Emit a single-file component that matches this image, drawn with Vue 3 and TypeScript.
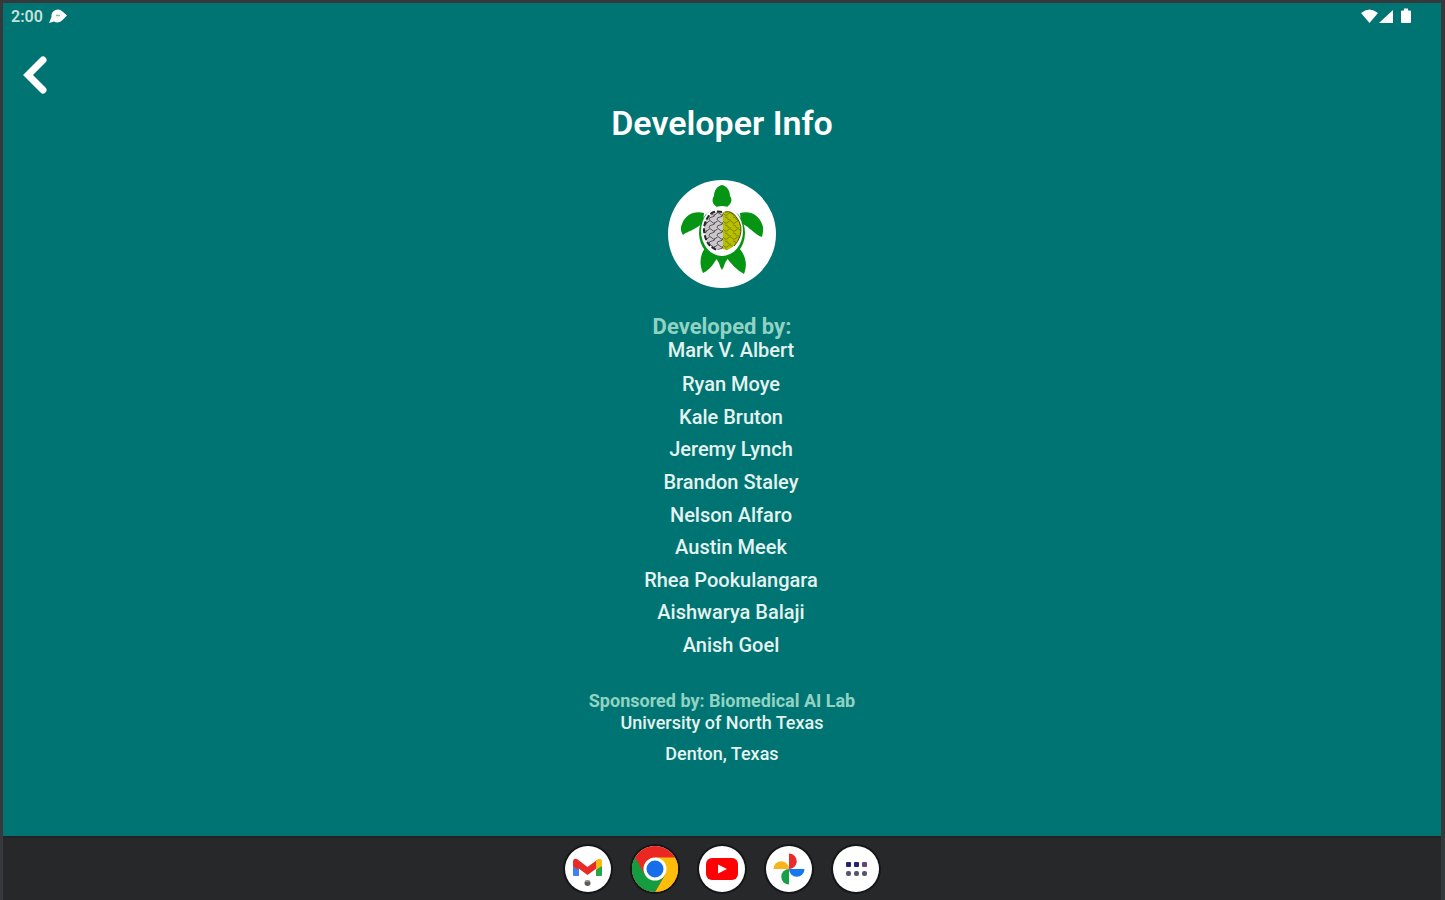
<script setup lang="ts">
const developers: string[] = [
  'Ryan Moye',
  'Kale Bruton',
  'Jeremy Lynch',
  'Brandon Staley',
  'Nelson Alfaro',
  'Austin Meek',
  'Rhea Pookulangara',
  'Aishwarya Balaji',
  'Anish Goel',
]
const goBack = (): void => window.history.back()
</script>

<template>
  <div class="device">
    <div class="screen">
      <header class="status">
        <div class="status-left">
          <span class="clock">2:00</span>
          <svg width="20" height="16" viewBox="0 0 20 16" aria-hidden="true">
            <path d="M1 15 L3.500 9 A6.500 6.500 0 0 1 14.500 3.500 L19 7.500 L14.500 12 A6.500 6.500 0 0 1 6 13.500 Z" fill="#fff" />
            <path d="M8 7.500h4" stroke="#8fb9ae" stroke-width="1.500" />
          </svg>
        </div>
        <svg width="52" height="18" viewBox="0 0 52 18" aria-hidden="true">
          <path d="M0 6 Q8.500 -1 17 6 L8.500 16 Z" fill="#fff" />
          <path d="M18 16 L32 3 V16 Z" fill="#fff" />
          <path d="M43 1.500h4v2h2q1 0 1 1V15q0 1-1 1h-8q-1 0-1-1V4.500q0-1 1-1h2Z" fill="#fff" />
        </svg>
      </header>

      <button class="back" type="button" aria-label="Back" @click="goBack">
        <svg width="24" height="38" viewBox="0 0 24 38" aria-hidden="true">
          <path d="M20 4 L5 19 L20 34" fill="none" stroke="#fff" stroke-width="7" stroke-linecap="round" stroke-linejoin="miter" />
        </svg>
      </button>

      <main class="content">
        <h1>Developer Info</h1>
        <svg class="logo" viewBox="0 0 108 108" role="img" aria-label="Turtle logo">
          <defs>
            <pattern id="left-folds" width="8" height="8" patternUnits="userSpaceOnUse">
              <rect width="8" height="8" fill="#cac8cb" />
              <path d="M0 2q2-3 4 0t4 0M1 8q0-3 3-3t3-3" fill="none" stroke="#5a565e" stroke-width="1" />
            </pattern>
            <pattern id="right-folds" width="8" height="8" patternUnits="userSpaceOnUse">
              <rect width="8" height="8" fill="#b7bf00" />
              <path d="M0 2q2 3 4 0t4 0M1 5q3 0 3 2t3 1" fill="none" stroke="#7f8600" stroke-width="1" />
            </pattern>
          </defs>
          <circle cx="54" cy="54" r="54" fill="#fff" />
          <g fill="#069414">
            <path d="M54 5C59 6 62 11 62 16C65 20 63 24 59 27H49C45 25 43 20 46 16C46 11 49 6 54 5Z" />
            <path d="M36 33C26 30 17 35 14 44C12 48 13 52 15 55C20 51 27 50 35 43Z" />
            <path d="M72 33C82 30 91 35 94 44C96 48 95 53 94 57C87 55 82 47 73 43Z" />
            <path d="M37 68C32 75 31 84 35 93C42 90 46 83 50 77Z" />
            <path d="M71 68C77 75 80 83 76 94C69 90 63 84 58 77Z" />
            <path d="M46 75H62L57 83Q56 87 54 90Q52 87 51 83Z" />
            <ellipse cx="54" cy="53" rx="23" ry="26" />
          </g>
          <ellipse cx="54" cy="51" rx="21" ry="25" fill="#fff" />
          <path d="M54 32Q44 30 40 37Q34 46 37 56Q39 66 49 70L55 69V32Z" fill="url(#left-folds)" />
          <path d="M54 32Q44 30 40 37Q34 46 37 56Q39 66 49 70" fill="none" stroke="#282328" stroke-width="2" stroke-dasharray="5 2" />
          <path d="M55 32Q64 30 69 38Q75 46 72 56Q69 66 59 70L55 69Z" fill="url(#right-folds)" />
          <path d="M57 32Q64 30 69 38Q75 46 72 56Q70 62 66 66" fill="none" stroke="#4e5200" stroke-width="1" />
        </svg>

        <section class="team">
          <h2>Developed by:</h2>
          <p class="lead">Mark V. Albert</p>
          <ul>
            <li v-for="name in developers" :key="name">{{ name }}</li>
          </ul>
        </section>

        <section class="sponsor">
          <h2>Sponsored by: Biomedical AI Lab</h2>
          <p>University of North Texas</p>
          <p>Denton, Texas</p>
        </section>
      </main>
    </div>

    <nav class="dock" aria-label="Apps">
      <button type="button" aria-label="Gmail">
        <svg viewBox="0 0 46 46" aria-hidden="true">
          <path d="M8 17v12q0 1 1 1h5V19Z" fill="#3f82f4" />
          <path d="M37 17v12q0 1-1 1h-5V19Z" fill="#25a54a" />
          <path d="M8 20v-4q0-4 4-3l10.500 8 9.500-7v8l-9.500 7L13 22v2Z" fill="#e92b25" />
          <path d="M31 15l2-2q4-1 4 3v4l-6 4Z" fill="#fbb90a" />
          <circle cx="22.500" cy="37" r="3" fill="#5c5c5c" />
          <path d="M20 35h5" stroke="#bbb" />
        </svg>
      </button>
      <button type="button" aria-label="Chrome">
        <svg viewBox="0 0 46 46" aria-hidden="true">
          <circle cx="23" cy="23" r="23" fill="#ea2821" />
          <path d="M23 11.500H42.920A23 23 0 0 1 23 46L33 28.750Z" fill="#fdbd08" />
          <path d="M13 28.750L3.080 11.500A23 23 0 0 0 23 46L33 28.750Z" fill="#159c40" />
          <circle cx="23" cy="23" r="11.500" fill="#fff" />
          <circle cx="23" cy="23" r="8.500" fill="#176ee9" />
        </svg>
      </button>
      <button type="button" aria-label="YouTube">
        <svg viewBox="0 0 46 46" aria-hidden="true">
          <rect x="7" y="12" width="32" height="22" rx="6" fill="#fe0105" />
          <path d="M19 18.500v9l9-4.500Z" fill="#fff" />
        </svg>
      </button>
      <button type="button" aria-label="Photos">
        <svg viewBox="0 0 46 46" aria-hidden="true">
          <path d="M23 23V7.500A7.700 7.700 0 0 1 23 23Z" fill="#ea2b2b" />
          <path d="M23 23H38.500A7.700 7.700 0 0 1 23 23Z" fill="#1677ee" />
          <path d="M23 23V38.500A7.700 7.700 0 0 1 23 23Z" fill="#16a04a" />
          <path d="M23 23H7.500A7.700 7.700 0 0 1 23 23Z" fill="#f8b51b" />
        </svg>
      </button>
      <button type="button" aria-label="All apps">
        <svg viewBox="0 0 46 46" aria-hidden="true">
          <g fill="#24246f">
            <rect x="13" y="16" width="5" height="5" rx="1" />
            <rect x="21" y="16" width="5" height="5" rx="1" />
            <rect x="29" y="16" width="5" height="5" rx="1" fill="#684570" />
          </g>
          <g fill="#55556b">
            <rect x="13" y="25" width="5" height="5" rx="2" />
            <rect x="21" y="25" width="5" height="5" rx="2" />
            <rect x="29" y="25" width="5" height="5" rx="2" />
          </g>
        </svg>
      </button>
    </nav>
  </div>
</template>

<style>
body {
  margin: 0;
}
</style>

<style scoped>
.device {
  box-sizing: border-box;
  min-height: 100vh;
  display: flex;
  flex-direction: column;
  border: solid #35393c;
  border-width: 3px 4px 0 3px;
  background: #27282a;
  color: #e4f3f0;
  font-family: Roboto, "Liberation Sans", sans-serif;
}
.screen {
  flex: 1;
  background: #007373;
}
.status {
  display: flex;
  justify-content: space-between;
  align-items: center;
  height: 26px;
  padding: 0 28px 0 8px;
}
.status-left {
  display: flex;
  align-items: center;
  gap: 5px;
}
.clock {
  font-size: 16px;
  font-weight: 600;
  color: #c5e2da;
}
.back {
  display: block;
  margin: 24px 0 0 20px;
  padding: 3px 0;
  border: 0;
  background: none;
  cursor: pointer;
}
.back svg {
  display: block;
}
.content {
  display: flex;
  flex-direction: column;
  align-items: center;
  text-align: center;
}
h1,
h2,
p,
ul {
  margin: 0;
  padding: 0;
}
h1 {
  margin-top: 6px;
  font-size: 34px;
  line-height: 40px;
  font-weight: 600;
  color: #fff;
}
.logo {
  width: 108px;
  height: 108px;
  margin-top: 37px;
}
h2 {
  font-weight: 700;
  color: #91d3c2;
}
.team {
  margin-top: 27px;
  font-size: 20px;
  line-height: 24px;
  font-weight: 500;
}
.team h2 {
  font-size: 22px;
  line-height: 23px;
}
.lead,
.team ul {
  padding-left: 18px;
}
.team ul {
  display: flex;
  flex-direction: column;
  justify-content: space-between;
  height: 285px;
  margin-top: 10px;
  list-style: none;
}
.sponsor {
  margin-top: 33px;
  font-size: 18px;
  line-height: 22px;
  font-weight: 500;
}
.sponsor h2 {
  font-size: 18px;
  line-height: 22px;
}
.sponsor p + p {
  margin-top: 9px;
}
.dock {
  box-sizing: border-box;
  display: flex;
  justify-content: center;
  align-items: center;
  gap: 21px;
  height: 64px;
  border-top: 2px solid #252124;
}
.dock button {
  width: 46px;
  height: 46px;
  padding: 0;
  border: 0;
  border-radius: 50%;
  background: #fff;
  box-shadow: 0 0 0 2px #151617;
  cursor: pointer;
}
.dock svg {
  display: block;
  width: 46px;
  height: 46px;
}
</style>
